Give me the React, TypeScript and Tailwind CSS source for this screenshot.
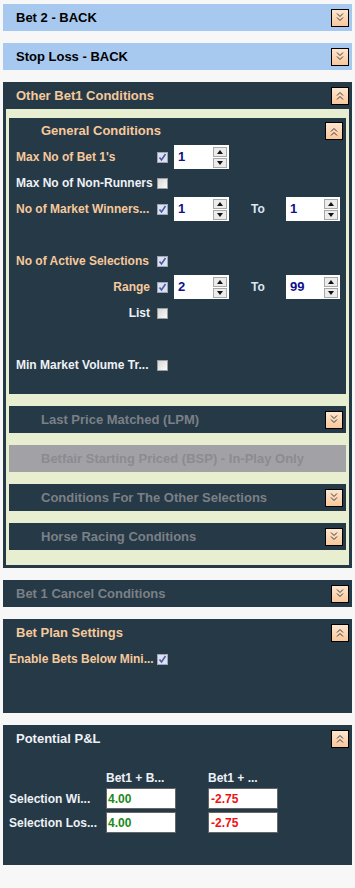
type Tone = 'peach' | 'white'

const font = "font-['Liberation_Sans',Arial,sans-serif]"

function Chevrons({ up }: { up?: boolean }) {
  return (
    <span className="flex h-[18px] w-[18px] items-center justify-center border border-black bg-gradient-to-b from-[#fde6cf] to-[#f9c89c]">
      <svg width="10" height="11" viewBox="0 0 10 11" className={up ? 'rotate-180' : ''}>
        <polyline points="2,1.5 5,4.5 8,1.5" fill="none" stroke="#3a3a3a" strokeWidth="1" />
        <polyline points="2,5.5 5,8.5 8,5.5" fill="none" stroke="#3a3a3a" strokeWidth="1" />
      </svg>
    </span>
  )
}

function Check({ on }: { on?: boolean }) {
  return (
    <span
      className={
        'flex h-[11px] w-[11px] shrink-0 items-center justify-center border ' +
        (on ? 'border-[#9ea4bd] bg-[#dde1ec]' : 'border-[#9c9c9c] bg-gradient-to-br from-[#d8d8d8] to-[#fbfbfb]')
      }
    >
      {on && (
        <svg width="9" height="9" viewBox="0 0 9 9">
          <polyline points="1.5,4.5 3.5,7 7.5,1" fill="none" stroke="#4a5ca8" strokeWidth="1.6" />
        </svg>
      )}
    </span>
  )
}

function Spin({ value, w = 'w-[55px]' }: { value: string; w?: string }) {
  return (
    <div className={`flex h-[24px] ${w} shrink-0 items-center justify-between bg-white pl-[4px] pr-[2px]`}>
      <span className="text-[13px] font-bold text-[#10108c]">{value}</span>
      <div className="flex flex-col gap-[1px]">
        {[0, 1].map((i) => (
          <span key={i} className="flex h-[10px] w-[14px] items-center justify-center border border-[#a8a8a8] bg-[#ececec]">
            <svg width="6" height="4" viewBox="0 0 6 4" className={i ? 'rotate-180' : ''}>
              <polygon points="0,4 3,0 6,4" fill="#111" />
            </svg>
          </span>
        ))}
      </div>
    </div>
  )
}

function Label({ text, tone, right }: { text: string; tone: Tone; right?: boolean }) {
  return (
    <span
      className={
        'ml-[7px] w-[134px] shrink-0 whitespace-nowrap text-[12px] font-bold ' +
        (tone === 'peach' ? 'text-[#f6c99b] ' : 'text-[#eef1f6] ') +
        (right ? 'text-right' : '')
      }
    >
      {text}
    </span>
  )
}

function CondRow({ label, tone, on, right, from, to }: { label?: string; tone?: Tone; on?: boolean; right?: boolean; from?: string; to?: string }) {
  if (!label) return <div className="h-[26px]" />
  return (
    <div className="flex h-[26px] items-center">
      <Label text={label} tone={tone ?? 'white'} right={right} />
      <span className="ml-[7px]">
        <Check on={on} />
      </span>
      {from && (
        <span className="ml-[6px]">
          <Spin value={from} />
        </span>
      )}
      {to && (
        <>
          <span className="w-[57px] pl-[22px] text-[12px] font-bold text-[#dde6f2]">To</span>
          <Spin value={to} w="w-[54px]" />
        </>
      )}
    </div>
  )
}

function SubBar({ title, grey }: { title: string; grey?: boolean }) {
  return (
    <div className={`flex h-[27px] items-center justify-between pl-[32px] pr-[3px] ${grey ? 'bg-[#a2a2a6]' : 'bg-[#263947]'}`}>
      <span className={`text-[13px] font-bold ${grey ? 'text-[#8b8b90]' : 'text-[#7b8086]'}`}>{title}</span>
      {!grey && <Chevrons />}
    </div>
  )
}

function Header({ title, color, up }: { title: string; color: string; up?: boolean }) {
  return (
    <div className="flex h-[27px] items-center justify-between pl-[13px] pr-[3px]">
      <span className={`text-[13px] font-bold ${color}`}>{title}</span>
      <Chevrons up={up} />
    </div>
  )
}

export default function App() {
  return (
    <div className={`${font} min-h-[888px] bg-[#f7f7f7] px-[3px] pt-[4px]`}>
      <div className="flex flex-col gap-[12px]">
        <div className="bg-[#a8c9ef]">
          <Header title="Bet 2 - BACK" color="text-black" />
        </div>
        <div className="bg-[#a8c9ef]">
          <Header title="Stop Loss - BACK" color="text-black" />
        </div>

        <div className="bg-[#263947] px-[3px] pb-[3px]">
          <div className="-mx-[3px]">
            <Header title="Other Bet1 Conditions" color="text-[#f6c99b]" up />
          </div>
          <div className="flex flex-col gap-[12px] bg-[#e8eed0] px-[3px] pt-[9px] pb-[15px]">
            <div className="bg-[#263947] pb-[16px]">
              <div className="flex h-[26px] items-center justify-between pl-[32px] pr-[3px]">
                <span className="text-[13px] font-bold text-[#f6c99b]">General Conditions</span>
                <Chevrons up />
              </div>
              <CondRow label="Max No of Bet 1's" tone="peach" on from="1" />
              <CondRow label="Max No of Non-Runners" />
              <CondRow label="No of Market Winners..." tone="peach" on from="1" to="1" />
              <CondRow />
              <CondRow label="No of Active Selections" tone="peach" on />
              <CondRow label="Range" tone="peach" on right from="2" to="99" />
              <CondRow label="List" right />
              <CondRow />
              <CondRow label="Min Market Volume Tr..." />
            </div>
            <SubBar title="Last Price Matched (LPM)" />
            <SubBar title="Betfair Starting Priced (BSP) - In-Play Only" grey />
            <SubBar title="Conditions For The Other Selections" />
            <SubBar title="Horse Racing Conditions" />
          </div>
        </div>

        <div className="bg-[#263947]">
          <Header title="Bet 1 Cancel Conditions" color="text-[#7b8086]" />
        </div>

        <div className="h-[94px] bg-[#263947]">
          <Header title="Bet Plan Settings" color="text-[#f6c99b]" up />
          <div className="flex h-[26px] items-center">
            <span className="w-[154px] shrink-0 whitespace-nowrap pl-[6px] text-[12px] font-bold text-[#f6c99b]">Enable Bets Below Mini...</span>
            <Check on />
          </div>
        </div>

        <div className="h-[140px] bg-[#263947]">
          <Header title="Potential P&L" color="text-[#eef1f6]" up />
          <div className="mt-[19px] flex flex-col gap-[3px] pl-[6px]">
            <div className="flex h-[14px] items-center text-[12px] font-bold text-[#eef1f6]">
              <span className="w-[97px]" />
              <span className="w-[102px]">Bet1 + B...</span>
              <span>Bet1 + ...</span>
            </div>
            {['Selection Wi...', 'Selection Los...'].map((l) => (
              <div key={l} className="flex h-[21px] items-center text-[12px] font-bold">
                <span className="w-[97px] text-[#eef1f6]">{l}</span>
                <span className="flex h-[21px] w-[70px] items-center border border-[#666] bg-white pl-[1px] text-[#1a8a1a]">4.00</span>
                <span className="ml-[32px] flex h-[21px] w-[70px] items-center border border-[#666] bg-white pl-[2px] text-[#f01010]">-2.75</span>
              </div>
            ))}
          </div>
        </div>
      </div>
    </div>
  )
}
